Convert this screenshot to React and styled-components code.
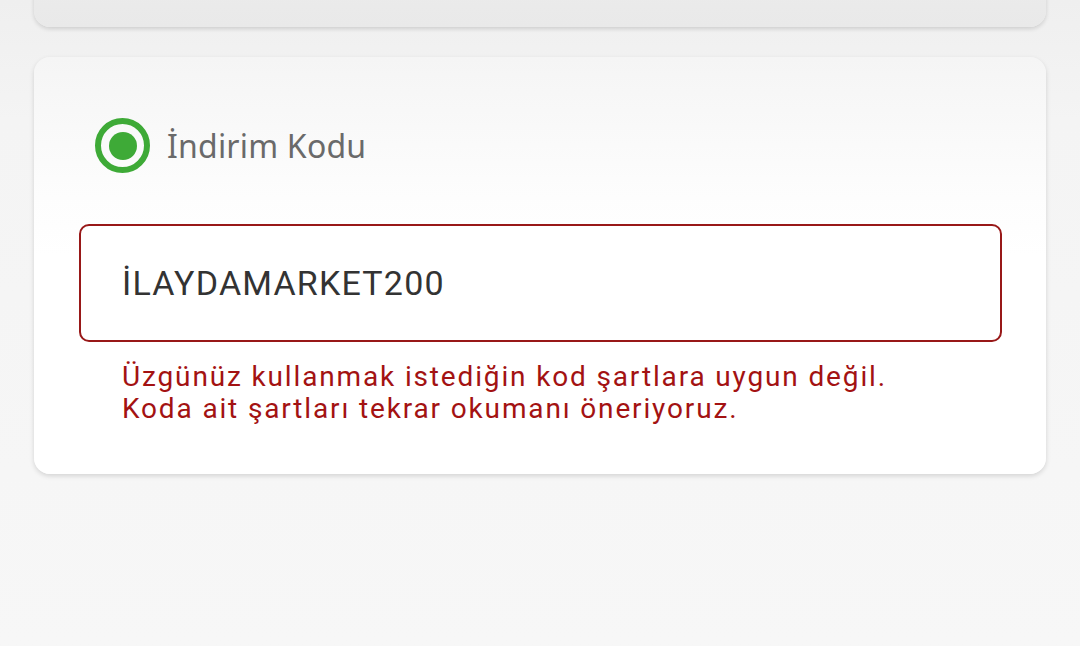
import React from 'react';
import styled, { createGlobalStyle } from 'styled-components';

const Global = createGlobalStyle`
  html, body {
    margin: 0;
    padding: 0;
    background: #f6f6f6;
  }
  #root {
    min-height: 646px;
  }
`;

const Page = styled.div`
  width: 1080px;
  height: 646px;
  overflow: hidden;
  background: linear-gradient(#efefef 0px, #f4f4f4 120px, #f7f7f7 646px);
  display: flex;
  flex-direction: column;
  align-items: center;
  gap: 30px;
  font-family: Roboto, "Liberation Sans", sans-serif;
`;

const TopCard = styled.div`
  width: 1012px;
  height: 60px;
  margin-top: -33px;
  border-radius: 0 0 16px 16px;
  background: linear-gradient(#ececec, #e9e9e9);
  box-shadow: 0 2px 4px rgba(0, 0, 0, 0.14);
  flex-shrink: 0;
`;

const Card = styled.div`
  width: 1012px;
  box-sizing: border-box;
  border-radius: 16px;
  background: linear-gradient(#f5f5f5 0px, #fdfdfd 140px, #ffffff 200px);
  box-shadow: 0 2px 5px rgba(0, 0, 0, 0.14);
  padding: 61px 44px 49px 45px;
  display: flex;
  flex-direction: column;
`;

const RadioRow = styled.label`
  display: flex;
  align-items: center;
  gap: 17px;
  padding-left: 16px;
  margin-bottom: 51px;
`;

const Radio = styled.span`
  width: 55px;
  height: 55px;
  box-sizing: border-box;
  border-radius: 50%;
  border: 6px solid #3eaa37;
  display: flex;
  align-items: center;
  justify-content: center;
  &::after {
    content: '';
    width: 28px;
    height: 28px;
    border-radius: 50%;
    background: #3eaa37;
  }
`;

const Label = styled.span`
  font-family: "Noto Sans", "Open Sans", sans-serif;
  font-size: 32px;
  color: #6a6a6a;
  letter-spacing: 0.2px;
`;

const Field = styled.div`
  height: 118px;
  box-sizing: border-box;
  border: 2.5px solid ${p => (p.$error ? '#981818' : '#cccccc')};
  border-radius: 10px;
  background: #fff;
  display: flex;
  align-items: center;
  padding: 0 41px;
  font-size: 34px;
  color: #333;
  letter-spacing: 1.2px;
`;

const ErrorText = styled.p`
  margin: 19px 0 0 43px;
  font-size: 28px;
  line-height: 32px;
  color: #a31212;
  letter-spacing: 1.85px;
`;

export default function App() {
  return (
    <Page>
      <Global />
      <TopCard />
      <Card>
        <RadioRow>
          <Radio />
          <Label>İndirim Kodu</Label>
        </RadioRow>
        <Field $error>İLAYDAMARKET200</Field>
        <ErrorText>
          Üzgünüz kullanmak istediğin kod şartlara uygun değil.
          <br />
          Koda ait şartları tekrar okumanı öneriyoruz.
        </ErrorText>
      </Card>
    </Page>
  );
}
